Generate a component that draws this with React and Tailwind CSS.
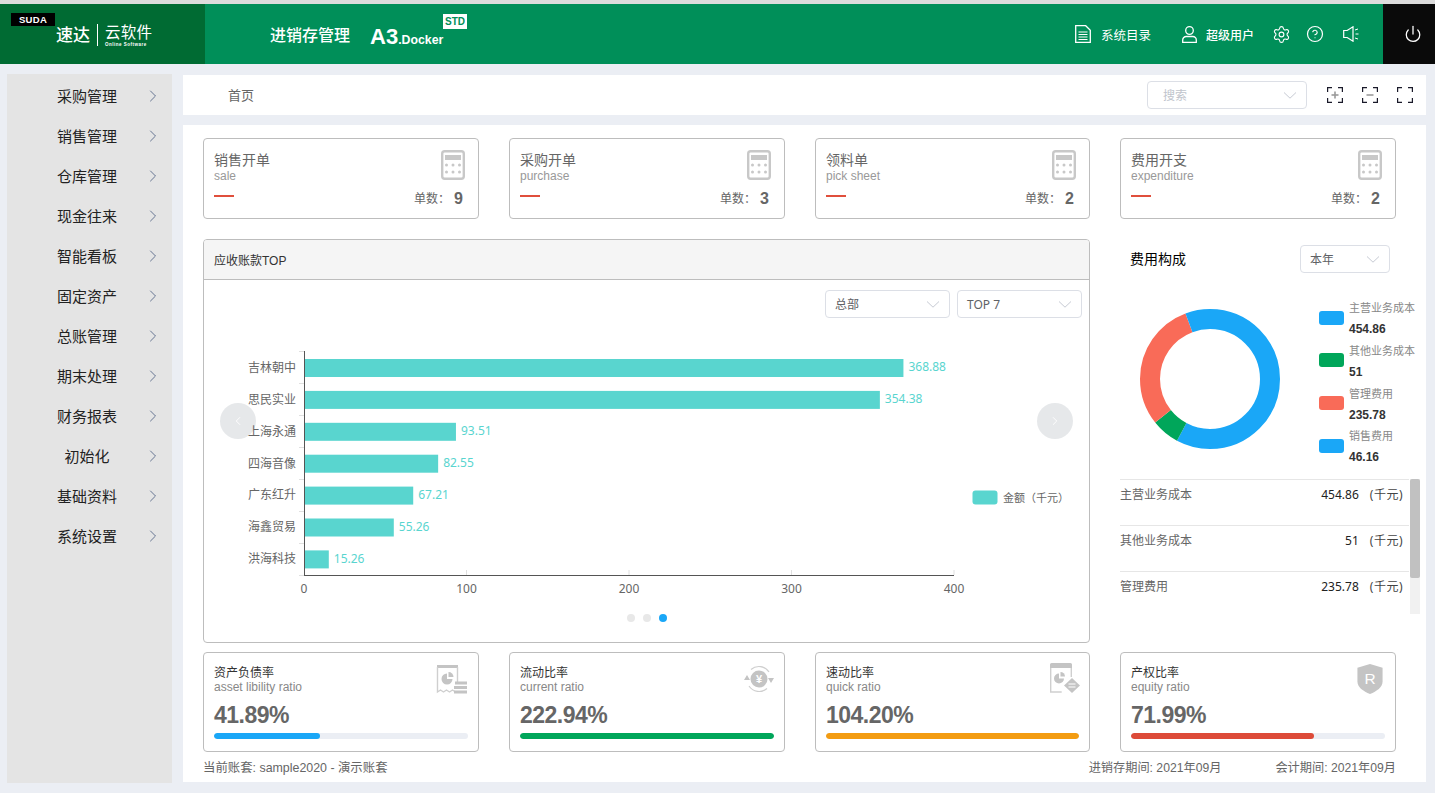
import React from "react";
import { ChevronRight, Settings, CircleHelp, Power, ChevronLeft } from "lucide-react";

const menu = ["采购管理","销售管理","仓库管理","现金往来","智能看板","固定资产","总账管理","期末处理","财务报表","初始化","基础资料","系统设置"];
const topCards = [
  ["销售开单","sale","9"],["采购开单","purchase","3"],["领料单","pick sheet","2"],["费用开支","expenditure","2"],
];
const bars = [["吉林朝中",368.88],["思民实业",354.38],["上海永通",93.51],["四海音像",82.55],["广东红升",67.21],["海鑫贸易",55.26],["洪海科技",15.26]];
const legend = [["主营业务成本","454.86","#1aa7f7"],["其他业务成本","51","#00a65a"],["管理费用","235.78","#f96b58"],["销售费用","46.16","#1aa7f7"]];

function Caret({ className = "" }) {
  return (
    <svg width="14" height="7" viewBox="0 0 14 7" fill="none" className={className}>
      <path d="M1 .5 7 6.2 13 .5" stroke="#c6cad3" strokeWidth="1" />
    </svg>
  );
}
function Select({ label, w, muted }) {
  return (
    <div className={`${w} h-[28px] flex items-center justify-between border border-[#dcdfe6] rounded-[4px] bg-white pr-[9px] ${muted ? "pl-[15px] text-[#c0c4cc]" : "pl-[9px] text-[#606266]"} text-[12px] font-['Noto_Sans','Noto_Sans_CJK_SC',sans-serif]`}>
      <span className="mt-[2px]">{label}</span>
      <Caret />
    </div>
  );
}
function CalcIcon() {
  return (
    <svg width="24" height="30" viewBox="0 0 24 30" fill="none">
      <rect x="1.2" y="1.2" width="21.6" height="27.6" rx="2.5" stroke="#c8c8c8" strokeWidth="2.4" />
      <rect x="4" y="5" width="16" height="5" fill="#c8c8c8" />
      {[5.5, 12, 18.5].map((x) => [15, 22].map((y) => <circle key={x + "-" + y} cx={x} cy={y} r="1.5" fill="#c8c8c8" />))}
    </svg>
  );
}
function Bracket({ kind }) {
  return (
    <svg width="16" height="16" viewBox="0 0 16 16" fill="none">
      <path d="M.6 5V.6H5M11 .6h4.4V5M15.4 11v4.4H11M5 15.4H.6V11" stroke="#1a1a2a" strokeWidth="1.2" />
      {kind !== "full" && <path d="M4.5 8h7" stroke="#9a9a9a" strokeWidth="1.6" />}
      {kind === "plus" && <path d="M8 4.5v7" stroke="#9a9a9a" strokeWidth="1.6" />}
    </svg>
  );
}
function ReceiptIcon() {
  return (
    <svg width="32" height="30" viewBox="0 0 32 30">
      <path d="M1 1h21v3H1z" fill="#c4c4c4" />
      <path d="M1.5 3v25l3-2 3 2 3-2 3 2 3-2 3 2M21.5 3v15" fill="none" stroke="#cfcfcf" strokeWidth="1.4" />
      <path d="M11 9.5a5.5 5.5 0 1 0 5.5 5.5H11z" fill="#c4c4c4" />
      <path d="M12.5 8a5 5 0 0 1 5 5h-5z" fill="#c4c4c4" />
      <path d="M19 17.5h12v3H19zM18 22h13v3H18zM18 26.5h13v3H18z" fill="#c4c4c4" />
    </svg>
  );
}
function CycleIcon() {
  return (
    <svg width="32" height="28" viewBox="-2 0 32 28" fill="none">
      <circle cx="14" cy="14" r="8.5" fill="#c4c4c4" />
      <text x="14" y="18" textAnchor="middle" fontSize="11" fontWeight="700" fill="#fff" fontFamily="Liberation Sans">¥</text>
      <path d="M6 4.5A12 12 0 0 1 24 7M22 23.5A12 12 0 0 1 4 21" stroke="#cfcfcf" strokeWidth="1.2" />
      <path d="M-1 15l3-5 3 5zM23 13l3 5 3-5z" fill="#c4c4c4" />
    </svg>
  );
}
function DocPieIcon() {
  return (
    <svg width="30" height="31" viewBox="0 0 30 31">
      <path d="M0 1.5A1.5 1.5 0 0 1 1.5 0h19A1.5 1.5 0 0 1 22 1.5V5H0z" fill="#c4c4c4" />
      <path d="M.7 5v24h11M21.3 5v9" fill="none" stroke="#cfcfcf" strokeWidth="1.4" />
      <path d="M9 10.5a5 5 0 1 0 5 5H9z" fill="#c4c4c4" />
      <path d="M10.5 9a4.5 4.5 0 0 1 4.5 4.5h-4.5z" fill="#c4c4c4" />
      <path d="M22 15l8 7.5L22 30l-8-7.5z" fill="#c4c4c4" />
      <path d="M18.5 21h7M25.5 24h-7" stroke="#fff" strokeWidth="1.2" />
    </svg>
  );
}
function ShieldIcon() {
  return (
    <svg width="26" height="30" viewBox="0 0 26 31">
      <path d="M13 0 26 4v14c0 6-6 10-13 13C6 28 0 24 0 18V4z" fill="#c4c4c4" />
      <text x="13" y="21" textAnchor="middle" fontSize="16" fill="#fff" fontFamily="Liberation Sans">R</text>
    </svg>
  );
}
const ratios = [
  ["资产负债率","asset libility ratio","41.89%",41.8,"bg-[#1aa7f7]",<ReceiptIcon />,"right-[10px] top-[11px]"],
  ["流动比率","current ratio","222.94%",100,"bg-[#00a65a]",<CycleIcon />,"right-[9px] top-[12px]"],
  ["速动比率","quick ratio","104.20%",100,"bg-[#f39c12]",<DocPieIcon />,"right-[9px] top-[10px]"],
  ["产权比率","equity ratio","71.99%",72,"bg-[#dd4b39]",<ShieldIcon />,"right-[12px] top-[11px]"],
];

function Chart() {
  const sx = 1.625;
  return (
    <svg width="885" height="300" viewBox="204 330 885 300" className="block font-['Noto_Sans','Noto_Sans_CJK_SC',sans-serif]">
      {Array.from({ length: 8 }).map((_, i) => (
        <line key={i} x1="299" x2="304" y1={351.5 + i * 32} y2={351.5 + i * 32} stroke="#e0e0e0" />
      ))}
      {[100, 200, 300, 400].map((t) => (
        <line key={t} x1={304 + t * sx} x2={304 + t * sx} y1="570" y2="575" stroke="#e0e0e0" />
      ))}
      {bars.map(([n, v], i) => {
        const y = 359 + i * 31.9;
        return (
          <g key={n}>
            <rect x="304" y={y} width={v * sx} height="18" fill="#59d5cf" />
            <text x="296" y={y + 8.3} textAnchor="end" dominantBaseline="central" fontSize="12" fill="#666">{n}</text>
            <text x={304 + v * sx + 5} y={y + 7.8} dominantBaseline="central" fontSize="12" fill="#59d5cf">{v}</text>
          </g>
        );
      })}
      <line x1="304.5" x2="304.5" y1="351" y2="575" stroke="#555" />
      <line x1="304" x2="954" y1="575.5" y2="575.5" stroke="#555" />
      {[0, 100, 200, 300, 400].map((t) => (
        <text key={t} x={304 + t * sx} y="588" textAnchor="middle" dominantBaseline="central" fontSize="12" fill="#666">{t}</text>
      ))}
      <rect x="972.5" y="490.5" width="25" height="14" rx="3" fill="#59d5cf" />
      <text x="1003" y="497.5" dominantBaseline="central" fontSize="11" fill="#666">金额（千元）</text>
      <circle cx="631" cy="618" r="4" fill="#e8e8e8" />
      <circle cx="647" cy="618" r="4" fill="#e8e8e8" />
      <circle cx="663" cy="618" r="4" fill="#1aa7f7" />
    </svg>
  );
}
function Donut() {
  const R = 60;
  const C = 2 * Math.PI * R;
  const total = 787.8;
  let acc = 0;
  const vals = [[454.86, "#1aa7f7"], [51, "#00a65a"], [235.78, "#f96b58"], [46.16, "#1aa7f7"]];
  return (
    <svg width="160" height="160" viewBox="0 0 160 160" className="block shrink-0">
      <g transform="rotate(-90 80 80)">
        {vals.map(([v, c], i) => {
          const len = (v / total) * C;
          const el = <circle key={i} cx="80" cy="80" r={R} fill="none" stroke={c} strokeWidth="20" strokeDasharray={`${len} ${C - len}`} strokeDashoffset={-acc} />;
          acc += len;
          return el;
        })}
      </g>
    </svg>
  );
}

export default function App() {
  return (
    <div className="w-full h-[793px] overflow-hidden bg-[#ebeef4] flex flex-col font-['Liberation_Sans','Noto_Sans_CJK_SC',sans-serif]">
      <div className="h-[4px] bg-[#dcdcdc]" />
      <header className="h-[60px] bg-[#008f59] flex items-center text-white shrink-0">
        <div className="relative w-[205px] h-full bg-[#006b33] flex items-center pl-[56px] shrink-0">
          <div className="absolute left-[11px] top-[9px] w-[44px] h-[13px] bg-black text-[9.5px] leading-[13px] font-bold text-center tracking-[0.3px]">SUDA</div>
          <span className="text-[17px] font-medium leading-none mt-[3px]">速达</span>
          <span className="w-px h-[22px] bg-white ml-[7px] mr-[7px] mt-[2px]" />
          <div className="flex flex-col items-start mt-[3px]">
            <span className="text-[15.5px] leading-[18px] tracking-[0.2px]">云软件</span>
            <span className="text-[4.5px] leading-[5px] font-bold tracking-[0.5px] whitespace-nowrap">Online Software</span>
          </div>
        </div>
        <span className="ml-[65px] text-[16px] font-medium leading-none mt-[3px]">进销存管理</span>
        <div className="relative ml-[20px] flex items-baseline mt-[5px]">
          <span className="text-[22px] font-bold leading-none">A3</span>
          <span className="text-[12.3px] font-bold leading-none">.Docker</span>
          <span className="absolute left-[73px] -top-[12px] w-[24px] h-[15px] bg-white text-[#008f59] text-[10px] leading-[15px] font-bold text-center">STD</span>
        </div>
        <div className="ml-auto flex items-center h-full">
          <svg width="16" height="18" viewBox="0 0 16 18" fill="none" className="shrink-0">
            <path d="M.7.7h10l4.6 4.6v12H.7z" stroke="#fff" strokeWidth="1.3" />
            <path d="M3.5 7h9M3.5 9.5h9M3.5 12h9M3.5 14.5h9" stroke="#fff" />
          </svg>
          <span className="ml-[10px] text-[12.5px] mt-[4px]">系统目录</span>
          <svg width="15" height="17" viewBox="0 0 15 17" fill="none" className="ml-[31px] shrink-0">
            <circle cx="7.5" cy="4.5" r="3.8" stroke="#fff" strokeWidth="1.3" />
            <path d="M.7 16.3V14a3.5 3.5 0 0 1 3.5-3.5h6.6A3.5 3.5 0 0 1 14.3 14v2.3z" stroke="#fff" strokeWidth="1.3" />
          </svg>
          <span className="ml-[9px] text-[12px] font-medium mt-[4px]">超级用户</span>
          <Settings size={19} strokeWidth={1.4} className="ml-[18px]" />
          <CircleHelp size={18} strokeWidth={1.6} className="ml-[15px]" />
          <svg width="16" height="16" viewBox="0 0 16 16" fill="none" className="ml-[19px]">
            <path d="M.7 4.5h3.5L10 .8v14.4l-5.8-3.7H.7z" stroke="#fff" strokeWidth="1.2" />
            <path d="M12 4l3-1M12.5 8h3M12 12l3 1" stroke="#fff" />
          </svg>
          <div className="ml-[24px] w-[52px] h-full bg-[#0a0a0a] flex items-center justify-center">
            <Power size={18} strokeWidth={1.7} className="ml-[8px]" />
          </div>
        </div>
      </header>
      <div className="flex pl-[7px] pr-[9px]">
        <aside className="w-[165px] h-[709px] mt-[10px] pt-[3px] bg-[#e4e4e4] shrink-0">
          {menu.map((m) => (
            <div key={m} className="h-[40px] flex items-center">
              <span className="w-[120px] ml-[20px] text-center text-[15px] text-[#222]">{m}</span>
              <ChevronRight size={20} strokeWidth={1.1} className="-ml-[4px] -mt-[3px] text-[#5a6a8a]" />
            </div>
          ))}
        </aside>
        <main className="ml-[11px] w-[1243px] mt-[11px] flex flex-col gap-[10px]">
          <div className="h-[40px] bg-white flex items-center">
            <span className="ml-[45px] text-[13px] text-[#666] mt-[1px]">首页</span>
            <div className="ml-auto mr-[13px] flex items-center">
              <Select label="搜索" w="w-[160px]" muted />
              <div className="ml-[20px] flex gap-[19px]">
                <Bracket kind="plus" />
                <Bracket kind="minus" />
                <Bracket kind="full" />
              </div>
            </div>
          </div>
          <div className="h-[657px] bg-white pl-[20px] pt-[13px]">
            <div className="grid grid-cols-[276px_276px_275px_276px] gap-x-[30px] grid-rows-[81px_424px_109px] gap-y-0">
              {topCards.map(([t, e, n]) => (
                <div key={t} className="border border-[#bdbdbd] rounded-[4px] flex justify-between pl-[10px] pr-[13px]">
                  <div className="pt-[12px]">
                    <div className="text-[14px] leading-[18px] text-[#666]">{t}</div>
                    <div className="text-[12px] leading-[14px] text-[#999]">{e}</div>
                    <div className="w-[20px] h-[2px] bg-[#e04f3c] mt-[12px]" />
                  </div>
                  <div className="pt-[11px] flex flex-col items-end">
                    <CalcIcon />
                    <div className="mt-[9px] h-[20px] flex items-center pr-[2px]">
                      <span className="text-[12px] text-[#666]">单数：</span>
                      <span className="ml-[4px] text-[16px] font-bold text-[#666]">{n}</span>
                    </div>
                  </div>
                </div>
              ))}
              <div className="col-span-3 relative mt-[20px] h-[404px] border border-[#bdbdbd] rounded-[4px] overflow-hidden">
                <div className="h-[40px] bg-[#f5f5f5] border-b border-[#bdbdbd] flex items-center pl-[10px] pt-[2px] text-[12px] text-[#333]">应收账款TOP</div>
                <div className="flex justify-end gap-[7px] pr-[7px] pt-[10px]">
                  <Select label="总部" w="w-[125px]" />
                  <Select label="TOP 7" w="w-[125px]" />
                </div>
                <div className="mt-[12px]"><Chart /></div>
                <div className="absolute left-[16px] top-[163px] w-[36px] h-[36px] rounded-full bg-[rgba(31,45,61,0.11)] flex items-center justify-center">
                  <ChevronLeft size={14} strokeWidth={1.5} className="text-white" />
                </div>
                <div className="absolute right-[16px] top-[163px] w-[36px] h-[36px] rounded-full bg-[rgba(31,45,61,0.11)] flex items-center justify-center">
                  <ChevronRight size={14} strokeWidth={1.5} className="text-white" />
                </div>
              </div>
              <div className="mt-[20px] w-[276px]">
                <div className="flex items-center justify-between pl-[10px] pr-[6px] pt-[6px]">
                  <span className="text-[14px] text-black">费用构成</span>
                  <Select label="本年" w="w-[90px]" />
                </div>
                <div className="mt-[25px] h-[181px] flex items-start whitespace-nowrap">
                  <div className="ml-[10px] mt-[1px]"><Donut /></div>
                  <div className="ml-[29px]">
                    {legend.map(([n, v, c]) => (
                      <div key={n} className="h-[42.67px] flex items-center">
                        <span className="w-[25px] h-[14px] rounded-[3px] -mt-[3px]" style={{ backgroundColor: c }} />
                        <div className="ml-[5px]">
                          <div className="text-[11px] leading-[21px] text-[#888]">{n}</div>
                          <div className="text-[12px] leading-[21px] font-bold text-[#333]">{v}</div>
                        </div>
                      </div>
                    ))}
                  </div>
                </div>
                <div className="w-[300px] h-[135px] flex overflow-hidden">
                  <div className="w-[289px] shrink-0">
                    {legend.slice(0, 3).map(([n, v]) => (
                      <div key={n} className="h-[46px] border-t border-[#e6e6e6] flex pt-[7px] pr-[6px] text-[12px] leading-[16px] font-['Noto_Sans','Noto_Sans_CJK_SC',sans-serif]">
                        <span className="text-[#666]">{n}</span>
                        <span className="ml-auto text-[#222]">{v}</span>
                        <span className="ml-[11px] text-[#444] tracking-[0.5px]">(千元)</span>
                      </div>
                    ))}
                  </div>
                  <div className="ml-[1px] w-[10px] bg-[#f1f1f1]">
                    <div className="h-[99px] bg-[#c1c1c1] rounded-[2px]" />
                  </div>
                </div>
              </div>
              {ratios.map(([t, e, v, p, c, icon, pos]) => (
                <div key={t} className="relative mt-[9px] h-[100px] border border-[#bdbdbd] rounded-[4px] pl-[10px] pr-[10px] pt-[14px]">
                  <div className={`absolute ${pos}`}>{icon}</div>
                  <div className="text-[12px] leading-[13px] text-[#333]">{t}</div>
                  <div className="text-[12px] leading-[14px] text-[#888]">{e}</div>
                  <div className="mt-[7px] text-[23px] tracking-[-0.5px] leading-[28px] font-bold text-[#666]">{v}</div>
                  <div className="mt-[4px] h-[6px] rounded-full bg-[#ebeef4] overflow-hidden">
                    <div className={`h-full rounded-full ${c}`} style={{ width: p + "%" }} />
                  </div>
                </div>
              ))}
            </div>
            <div className="w-[1193px] h-[30px] pt-[9px] flex items-start leading-[14px] text-[#666]">
              <span className="text-[12.4px]">当前账套: sample2020 - 演示账套</span>
              <span className="ml-auto text-[12.2px]">进销存期间: 2021年09月</span>
              <span className="ml-[54px] text-[12.2px]">会计期间: 2021年09月</span>
            </div>
          </div>
        </main>
      </div>
    </div>
  );
}
